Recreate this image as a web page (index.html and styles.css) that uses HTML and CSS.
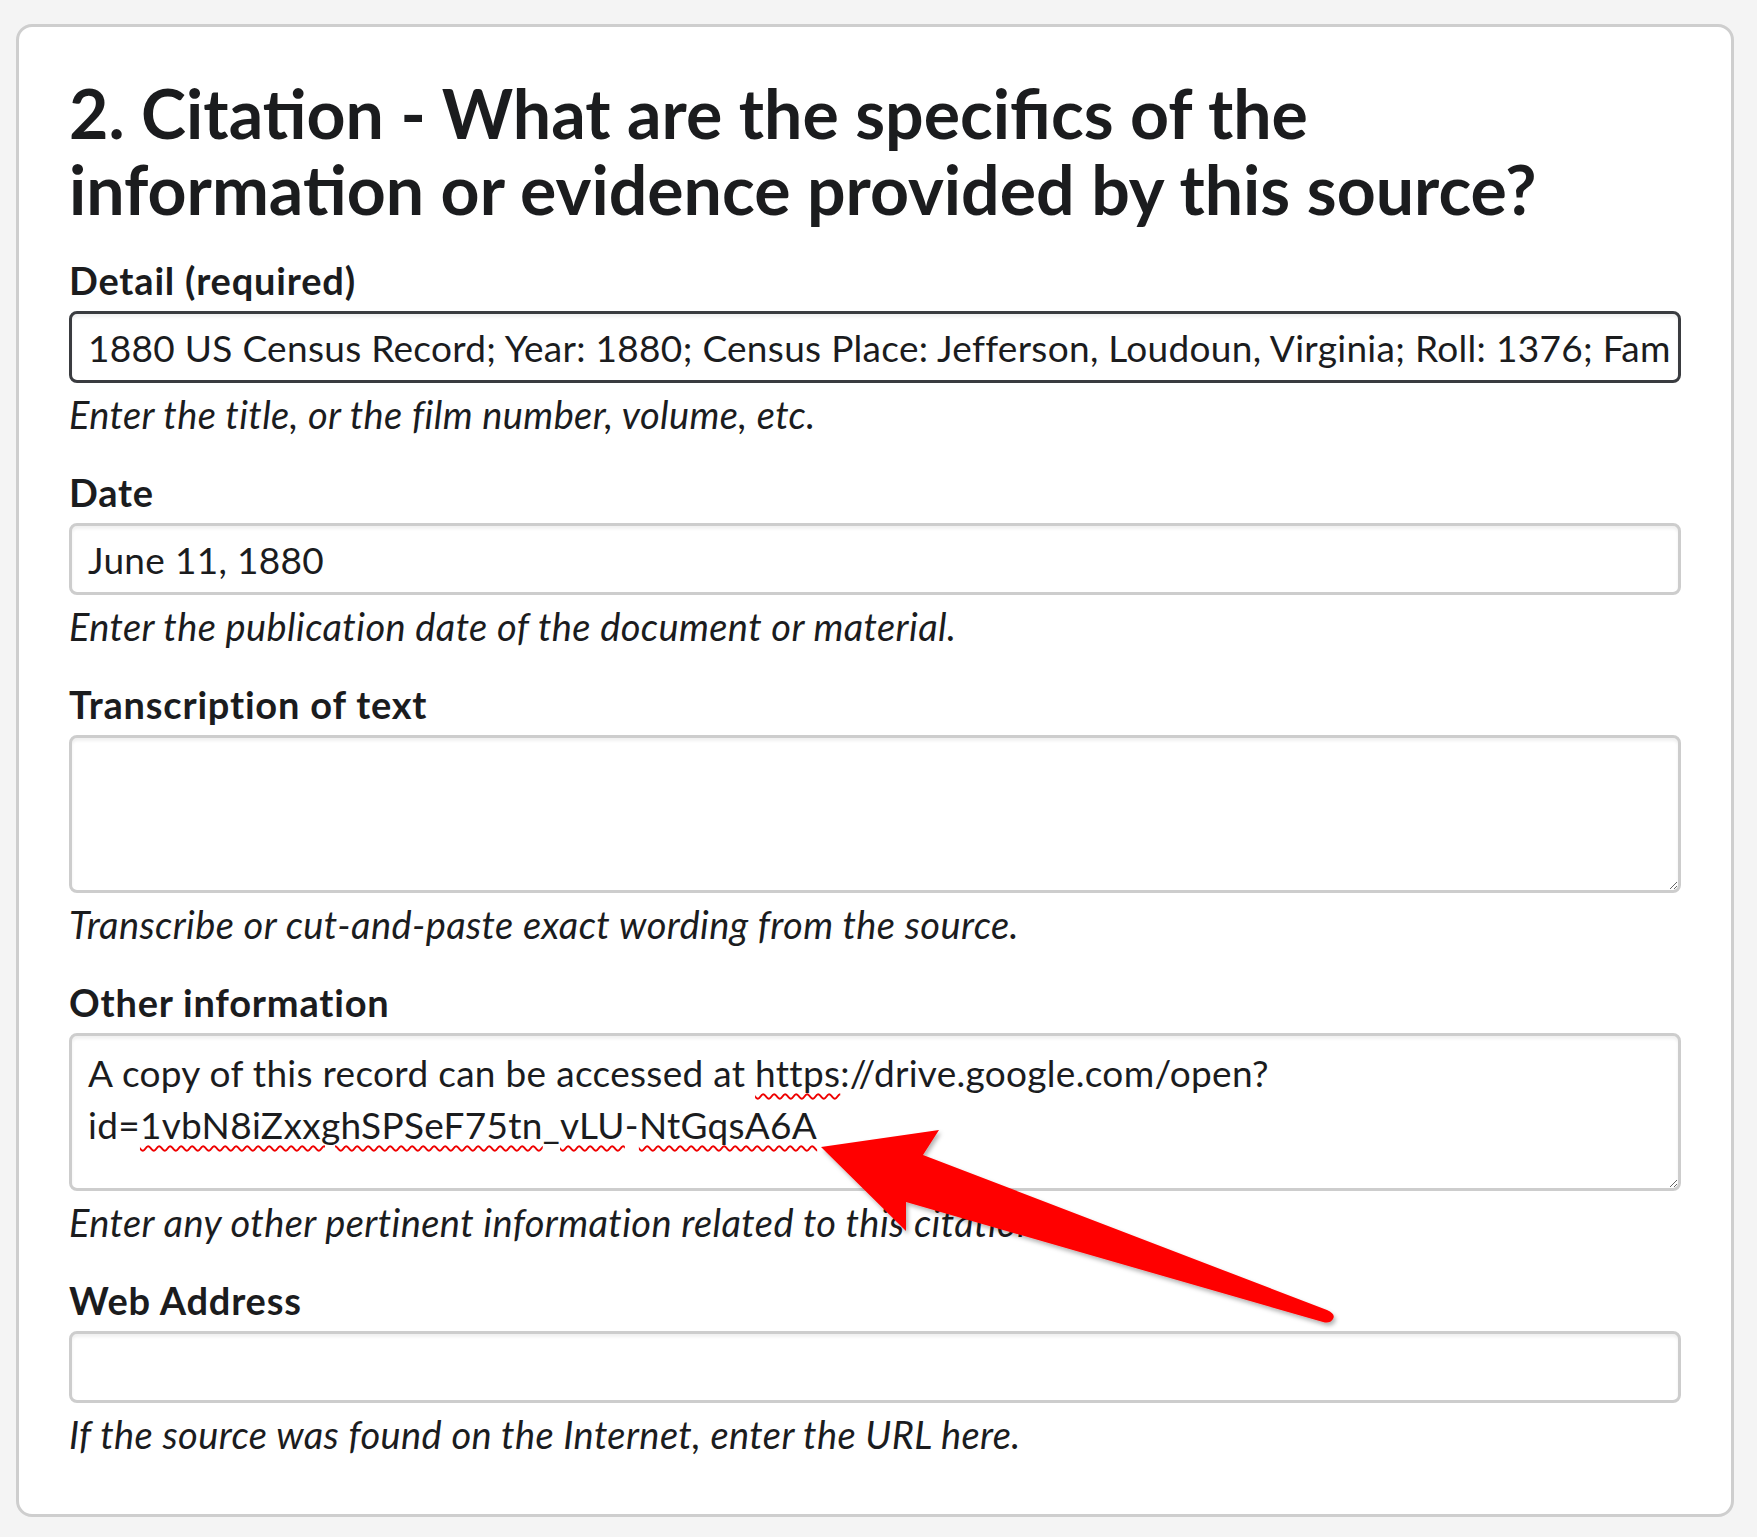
FILE: index.html
```html
<!DOCTYPE html>
<html lang="en">
<head>
    <meta charset="UTF-8">
    <title>Citation</title>
    <link rel="stylesheet" href="styles.css">
</head>
<body>

    <main class="card">
        <h1>2. Citation - What are the specifics of the<br>information or evidence provided by this source?</h1>

        <div class="field">
            <label for="detail">Detail (required)</label>
            <input id="detail" class="input input-focus" type="text" value="1880 US Census Record; Year: 1880; Census Place: Jefferson, Loudoun, Virginia; Roll: 1376; Family History Film: 1254376; Page: 123A">
            <p class="help">Enter the title, or the film number, volume, etc.</p>
        </div>

        <div class="field">
            <label for="date">Date</label>
            <input id="date" class="input" type="text" value="June 11, 1880">
            <p class="help">Enter the publication date of the document or material.</p>
        </div>

        <div class="field">
            <label for="transcription">Transcription of text</label>
            <textarea id="transcription" class="input textarea"></textarea>
            <p class="help">Transcribe or cut-and-paste exact wording from the source.</p>
        </div>

        <div class="field">
            <label for="other">Other information</label>
            <!-- div instead of textarea so the spellcheck squiggles can be shown -->
            <div id="other" class="input textarea" contenteditable="true">A copy of this record can be accessed at <span class="typo">https</span>://drive.google.com/open?id=<span class="typo">1vbN8iZxxghSPSeF75tn</span>_<span class="typo">vLU</span>-<span class="typo">NtGqsA6A</span></div>
            <p class="help">Enter any other pertinent information related to this citation.</p>
        </div>

        <div class="field">
            <label for="url">Web Address</label>
            <input id="url" class="input" type="text" value="">
            <p class="help">If the source was found on the Internet, enter the URL here.</p>
        </div>
    </main>

    <svg class="arrow" width="1757" height="1537" viewBox="0 0 1757 1537">
        <defs>
            <filter id="shadow" x="-10%" y="-10%" width="120%" height="130%">
                <feDropShadow dx="2" dy="3" stdDeviation="2" flood-color="#000" flood-opacity="0.3"/>
            </filter>
        </defs>
        <path d="M821 1147 L939 1130 L923 1155 L1327 1310 Q1336 1314 1333 1319 Q1330 1324 1323 1322 L906 1202 L906 1231 Z" fill="#ff0000" filter="url(#shadow)"/>
    </svg>

</body>
</html>
```

FILE: styles.css
```css
body {
    font-family: Lato, "Noto Sans", sans-serif;
    background: #f4f4f4;
    color: #1b1c1e;
    margin: 0;
    padding: 24px 23px 19px 16px;
    position: relative;
}

.card {
    background: #fff;
    border: 3px solid #cecece;
    border-radius: 16px;
    padding: 48px 50px 53px;
}

h1 {
    font-size: 68px;
    line-height: 76px;
    font-weight: 700;
    margin: 0 0 26px;
}

.field {
    margin-bottom: 24px;
}

.field:last-child {
    margin-bottom: 0;
}

label {
    display: block;
    font-size: 38px;
    font-weight: 700;
    letter-spacing: 0.8px;
    line-height: 54px;
    margin-bottom: 4px;
}

.input {
    display: block;
    box-sizing: border-box;
    width: 100%;
    height: 72px;
    margin: 0;
    padding: 0 8px 0 16px;
    border: 3px solid #cdcdcd;
    border-radius: 8px;
    background: #fff;
    box-shadow: inset 0 3px 3px rgba(0, 0, 0, 0.06);
    font-family: inherit;
    font-size: 37px;
    letter-spacing: 0.3px;
    color: #1b1c1e;
    outline: none;
}

.input-focus {
    border-color: #3a3c40;
}

.textarea {
    height: 158px;
    padding: 11px 16px;
    line-height: 52px;
    resize: vertical;
    overflow: auto;
}

.typo {
    text-decoration: underline wavy #e00;
    text-decoration-thickness: 2px;
    text-underline-offset: 6px;
}

.help {
    margin: 4px 0 0;
    font-size: 38px;
    font-style: italic;
    letter-spacing: 0.4px;
    line-height: 54px;
}

.arrow {
    position: absolute;
    top: 0;
    left: 0;
    pointer-events: none;
}
```
